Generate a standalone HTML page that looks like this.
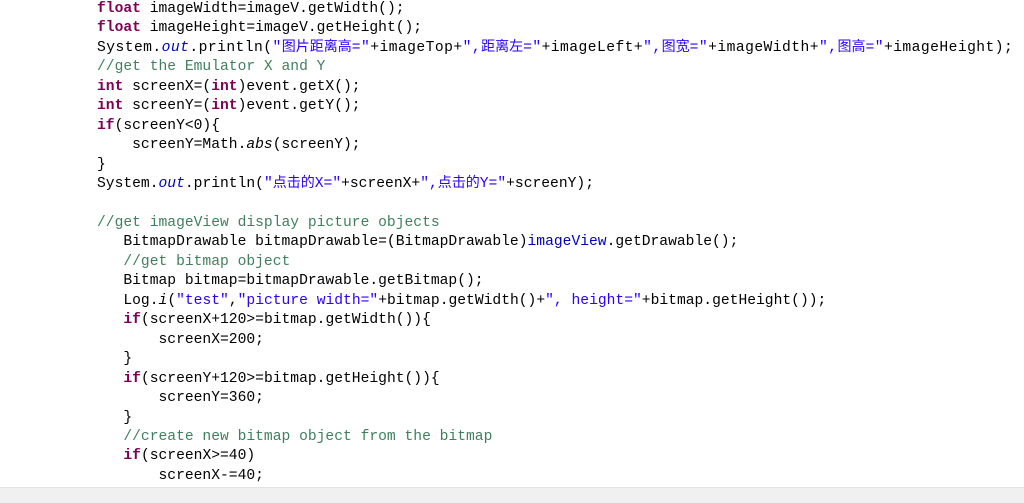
<!DOCTYPE html>
<html><head><meta charset="utf-8"><style>
body{margin:0;width:1024px;height:502px;background:#fff;overflow:hidden;position:relative}
pre{margin:0;position:absolute;left:97px;top:0px;font-family:"Liberation Mono","Noto Sans CJK SC",monospace;font-size:14.65px;line-height:19.45px;color:#000}
.k{color:#7f0055;font-weight:bold}.c{color:#3f7f5f}.s{color:#2a00ff}.f{color:#0000c0;font-style:italic}.i{font-style:italic}
.cn{font-size:14px;letter-spacing:0}
.w{letter-spacing:0.45px}
.bar{position:absolute;left:0;top:487px;width:1024px;height:15px;background:#f0f0f0;border-top:1px solid #e4e4e4}
</style></head><body>
<pre><span class="k">float</span> imageWidth=imageV.getWidth();
<span class="k">float</span> imageHeight=imageV.getHeight();
<span class="w">System.<span class="f">out</span>.println(<span class="s">"<span class="cn">图片距离高</span>="</span>+imageTop+<span class="s">",<span class="cn">距离左</span>="</span>+imageLeft+<span class="s">",<span class="cn">图宽</span>="</span>+imageWidth+<span class="s">",<span class="cn">图高</span>="</span>+imageHeight);</span>
<span class="c">//get the Emulator X and Y</span>
<span class="k">int</span> screenX=(<span class="k">int</span>)event.getX();
<span class="k">int</span> screenY=(<span class="k">int</span>)event.getY();
<span class="k">if</span>(screenY&lt;0){
    screenY=Math.<span class="i">abs</span>(screenY);
}
System.<span class="f">out</span>.println(<span class="s">"<span class="cn">点击的</span>X="</span>+screenX+<span class="s">",<span class="cn">点击的</span>Y="</span>+screenY);

<span class="c">//get imageView display picture objects</span>
   BitmapDrawable bitmapDrawable=(BitmapDrawable)<span style="color:#0000c0">imageView</span>.getDrawable();
   <span class="c">//get bitmap object</span>
   Bitmap bitmap=bitmapDrawable.getBitmap();
   Log.<span class="i">i</span>(<span class="s">"test"</span>,<span class="s">"picture width="</span>+bitmap.getWidth()+<span class="s">", height="</span>+bitmap.getHeight());
   <span class="k">if</span>(screenX+120&gt;=bitmap.getWidth()){
       screenX=200;
   }
   <span class="k">if</span>(screenY+120&gt;=bitmap.getHeight()){
       screenY=360;
   }
   <span class="c">//create new bitmap object from the bitmap</span>
   <span class="k">if</span>(screenX&gt;=40)
       screenX-=40;</pre>
<div class="bar"></div>
</body></html>
